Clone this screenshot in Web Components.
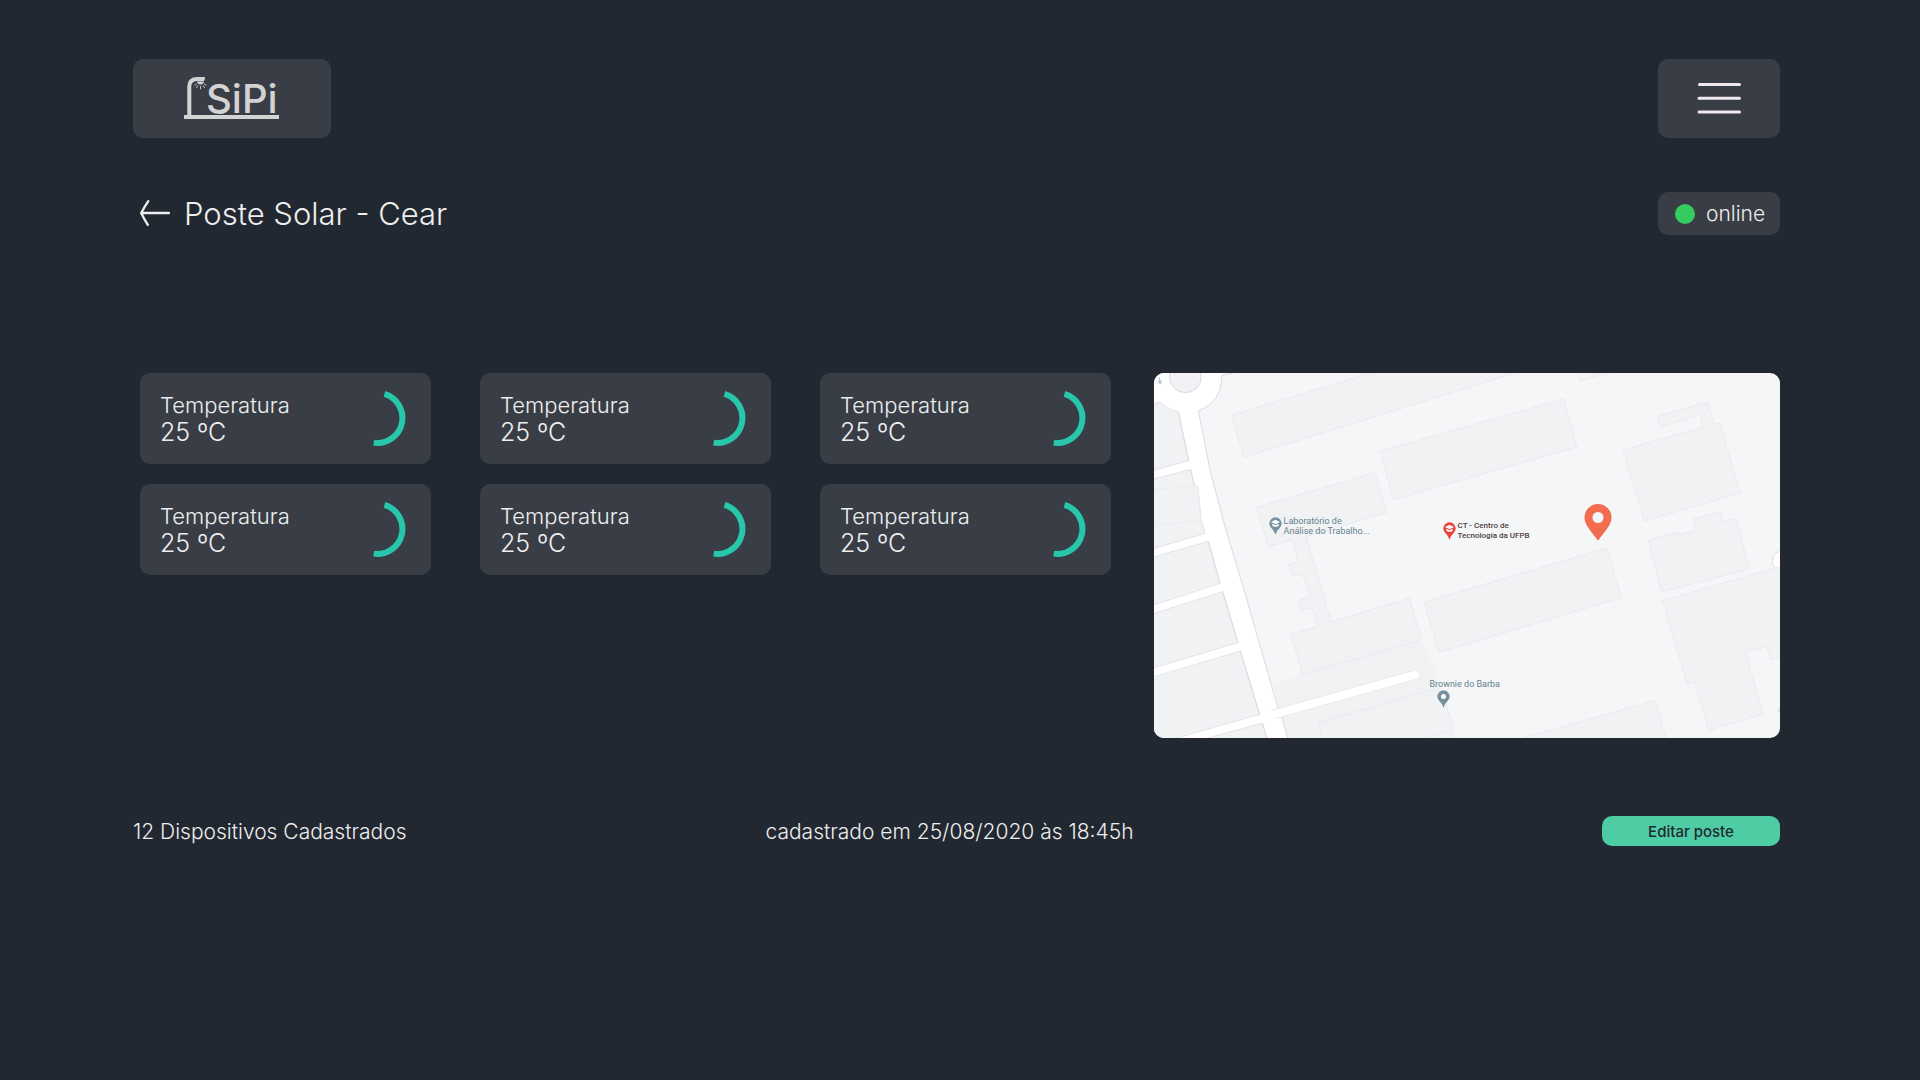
<!DOCTYPE html>
<html lang="pt-BR">
<head>
<meta charset="utf-8">
<meta name="viewport" content="width=device-width, initial-scale=1">
<title>SiPi</title>
<style>
  body {
    margin: 0;
    min-height: 100vh;
    background: #222831;
    color: #eeeeee;
    font-family: Inter, "Open Sans", sans-serif;
    font-weight: 300;
    --surface: #393e46;
    --radius: 10px;
  }
</style>
</head>
<body>
<sipi-page></sipi-page>

<script>
const define = (name, html) => {
  const template = document.createElement('template');
  template.innerHTML = html;
  customElements.define(name, class extends HTMLElement {
    constructor() {
      super();
      this.attachShadow({ mode: 'open' }).append(template.content.cloneNode(true));
    }
  });
};

define('sipi-logo', `
  <style>
    :host { display: block; }
    a { display: grid; place-items: center; width: 198px; height: 79px; background: var(--surface); border-radius: var(--radius); }
    svg { display: block; overflow: visible; }
    text { font-size: 40px; font-weight: 500; fill: #d3d3d3; }
  </style>
  <a href="#" aria-label="SiPi">
    <svg width="96" height="43" viewBox="0 0 96 43">
      <path d="M5.300 39V9.500Q5.300 2 13.500 2H19.500" fill="none" stroke="#d3d3d3" stroke-width="4"/>
      <path d="M18 0h2q1.500 0 1 1.500l-1 2.500h-6V1z" fill="#d3d3d3"/>
      <path d="M13 4.500h7q-.5 3-3.500 3T13 4.500z" fill="#d3d3d3"/>
      <path d="M12.800 7l-2.300 1.300M14 8.500l-1.700 2.500M16.500 9V12.200M19 8.500l1.700 2.500M20.200 7l2.300 1.300" stroke="#d3d3d3" stroke-width=".9"/>
      <rect x="0" y="38" width="95" height="4" fill="#d3d3d3"/>
      <text x="22" y="36">SiPi</text>
    </svg>
  </a>`);

define('menu-button', `
  <style>
    :host { display: block; }
    button { display: grid; place-items: center; width: 122px; height: 79px; padding: 0; border: 0; background: var(--surface); border-radius: var(--radius); cursor: pointer; }
    svg { display: block; }
  </style>
  <button type="button" aria-label="Menu">
    <svg width="44" height="33" viewBox="0 0 44 33" stroke="#f0eaee" stroke-width="3" stroke-linecap="round">
      <path d="M2.500 2.500H42.500M2 16.200H42.500M2 30H42.500"/>
    </svg>
  </button>`);

define('page-title', `
  <style>
    :host { display: flex; align-items: center; gap: 14px; padding-left: 7px; }
    button { display: block; padding: 0; border: 0; background: none; color: inherit; cursor: pointer; }
    svg { display: block; }
    h1 { margin: 0; font-size: 31px; line-height: 43px; font-weight: 300; }
  </style>
  <button type="button" aria-label="Voltar">
    <svg width="30" height="27" viewBox="0 0 30 27" fill="none" stroke="currentColor" stroke-width="2.300" stroke-linecap="round" stroke-linejoin="round">
      <path d="M8.300 1.200Q5 6 1.200 13Q3.500 18 7.800 24.800M1.200 13H29"/>
    </svg>
  </button>
  <h1><slot></slot></h1>`);

define('status-badge', `
  <style>
    :host { display: flex; align-items: center; gap: 11px; box-sizing: border-box; width: 122px; height: 43px; padding-left: 17px; background: var(--surface); border-radius: var(--radius); font-size: 21px; }
    i { width: 20px; height: 20px; border-radius: 50%; background: #34cb5f; }
  </style>
  <i></i><span><slot></slot></span>`);

define('sensor-card', `
  <style>
    :host { display: flex; align-items: center; justify-content: space-between; box-sizing: border-box; height: 91px; padding: 0 25px 0 20px; background: var(--surface); border-radius: var(--radius); line-height: 27px; }
    .label { font-size: 22px; }
    .value { font-size: 25px; }
    svg { display: block; }
  </style>
  <div>
    <div class="label"><slot name="label"></slot></div>
    <div class="value"><slot></slot></div>
  </div>
  <svg width="56" height="57" viewBox="0 0 56 57" fill="none" stroke="#28c7ab" stroke-width="6">
    <path d="M34.500 3.900A25 25 0 0 1 23.700 52.600"/>
  </svg>`);

/* A place on the map: its pin hangs from --x / --y, the label sits beside or above it. */
define('map-place', `
  <style>
    :host { position: absolute; left: var(--x); top: var(--y); display: flex; align-items: center; gap: 2px; color: #64828f; font: 400 9px/10px Roboto, sans-serif; white-space: nowrap; }
    :host([above]) { flex-direction: column-reverse; gap: 1px; }
    :host([main]) { color: #4a3f3a; font-size: 8px; font-weight: 500; --pin: #ea4335; }
    svg { display: block; width: 13px; height: 18px; }
    .cap { display: none; }
    :host([school]) .cap { display: block; }
    :host([school]) .hole { display: none; }
    :host([above]) svg { margin-right: 42px; }
  </style>
  <svg viewBox="0 0 39 54">
    <path d="M19.500 1a18.500 18.500 0 0 1 18.500 18.500c0 11-12 17-16 28l-2.500 6-2.500-6c-4-11-16-17-16-28A18.500 18.500 0 0 1 19.500 1z" style="fill: var(--pin, #7790a0)"/>
    <circle class="hole" cx="19.500" cy="19.500" r="7.500" fill="#fff"/>
    <path class="cap" d="M19.500 8L33 15 19.500 22 6 15zM10 20l9.500 5 9.500-5v6q-9.500 7-19 0z" fill="#fff"/>
  </svg>
  <span><slot></slot></span>`);

define('location-map', `
  <style>
    :host { display: block; position: relative; overflow: hidden; border-radius: var(--radius); background: #f5f6f8; aspect-ratio: 626 / 365; }
    .ground { display: block; width: 100%; height: 100%; }
    .pole { position: absolute; left: 68.700%; top: 35.600%; width: 28px; height: 38px; }
  </style>
  <svg class="ground" viewBox="42 39 1878 1095" preserveAspectRatio="xMidYMid slice" aria-hidden="true">
    <g fill="#f1f2f4" stroke="#e9eaed" stroke-width="3">
      <path d="M400 975L488 943 845 840 886 930 950 1140H443z" stroke="none"/>
      <path d="M534 1089L880 988 908 1000 942 1105 830 1140H547z"/>
      <path d="M274 166L690 39V30H1150L1125 39 312 292z"/>
      <path d="M720 274L1271 117 1311 261 760 419z"/>
      <path d="M350 442L704 338 740 457 498 530 510 570 573 785 808 715 845 840 488 943 453 823 533 799 517 743 486 751 478 721 510 710 487 640 458 650 447 613 474 606 458 539 385 560z"/>
      <path d="M852 727L1400 564 1444 713 897 877z"/>
      <path d="M1312 30L1322 63 1435 30z"/>
      <path d="M1553 169L1703 126 1722 193 1740 189 1801 399 1513 483 1449 270 1689 201 1679 165 1561 200z"/>
      <path d="M1525 541L1617 516 1620 523 1669 510 1662 476 1740 456 1749 485 1789 475 1828 627 1565 696z"/>
      <circle cx="1930" cy="603" r="33" fill="#fff" stroke="#d9dbe2"/>
      <path d="M1568 722L1930 617V890L1892 899 1881 860 1816 877 1870 1062 1706 1111 1665 966 1641 971z"/>
      <path d="M1125 1140L1546 1022 1580 1140z"/>
    </g>
    <circle cx="1924" cy="1051" r="9" fill="#d9dbe2"/>
    <path d="M30 30H245L245 60Q238 128 175 152L210 330 255 500 315 700 415 1048 445 1140H30z" fill="#fff"/>
    <g fill="none" stroke="#d9dbe2" stroke-width="3">
      <path d="M280 39L245 47Q245 128 175 152L210 330 255 500 315 700 415 1048"/>
      <path d="M425 1072L445 1140"/>
    </g>
    <path d="M405 1062L826 944" stroke="#e6e7ea" stroke-width="29" stroke-linecap="round"/>
    <path d="M395 1065L826 944" stroke="#fff" stroke-width="25" stroke-linecap="round"/>
    <g fill="#f1f2f4" stroke="#dfe0e5" stroke-width="2.500">
      <path d="M30 134L60 126Q82 149 115 155L146 302 30 334z"/>
      <path d="M30 360L152 328 163 376 173 378 184 482 196 520 30 569z"/>
      <path d="M30 594L205 544 240 670 30 739z"/>
      <path d="M30 764L248 695 294 848 30 927z"/>
      <path d="M30 954L301 873 359 1063 100 1137 30 1155z"/>
      <path d="M180 1140L367 1089 382 1140z"/>
      <path d="M30 390L170 378M30 497L184 481" stroke="#e9eaed"/>
    </g>
    <g fill="none" stroke="#d9dbe2" stroke-width="3">
      <path d="M115 155L146 302M152 328L163 376M205 544L240 670M248 695L294 848M301 873L359 1063M367 1089L382 1140"/>
      <circle cx="136" cy="50" r="48" fill="#f1f2f4"/>
    </g>
    <path d="M57 52L61 70M54 64L61 71 65 61" stroke="#bcc3dd" stroke-width="4" fill="none"/>
  </svg>
  <map-place school style="--x: 18.300%; --y: 39.100%">Laboratório de<br>Análise do Trabalho...</map-place>
  <map-place school main style="--x: 46.100%; --y: 40.500%">CT - Centro de<br>Tecnologia da UFPB</map-place>
  <map-place above style="--x: 44%; --y: 83.900%">Brownie do Barba</map-place>
  <svg class="pole" viewBox="0 0 28 38" role="img" aria-label="Poste">
    <path d="M14 1A13.500 13.500 0 0 1 27.500 14.500C27.500 22 20.500 28.500 15 36.500Q14 38 13 36.500C7.500 28.500.5 22 .5 14.500A13.500 13.500 0 0 1 14 1z" fill="#f26d50"/>
    <circle cx="14" cy="14.500" r="5.500" fill="#f5f6f8"/>
  </svg>`);

define('edit-button', `
  <style>
    :host { display: block; }
    button { display: block; width: 178px; height: 30px; padding: 0; border: 0; border-radius: var(--radius); background: #4ecca3; color: #222831; font: inherit; font-size: 15px; font-weight: 500; cursor: pointer; }
  </style>
  <button type="button"><slot></slot></button>`);

define('sipi-page', `
  <style>
    :host { display: block; padding: 59px 140px 59px 133px; }
    header, .heading { display: flex; align-items: center; justify-content: space-between; }
    .heading { margin-top: 54px; }
    main { display: grid; grid-template-columns: 971fr 626fr; gap: 43px; align-items: start; margin-top: 138px; padding-left: 7px; }
    .cards { display: grid; grid-template-columns: repeat(3, 1fr); gap: 20px 49px; }
    footer { display: grid; grid-template-columns: 1fr auto 1fr; align-items: center; margin-top: 78px; font-size: 21px; }
    .date { margin-right: 14px; }
    edit-button { justify-self: end; }
  </style>
  <header>
    <sipi-logo></sipi-logo>
    <menu-button></menu-button>
  </header>
  <div class="heading">
    <page-title>Poste Solar - Cear</page-title>
    <status-badge>online</status-badge>
  </div>
  <main>
    <section class="cards">
      <sensor-card><span slot="label">Temperatura</span>25 ºC</sensor-card>
      <sensor-card><span slot="label">Temperatura</span>25 ºC</sensor-card>
      <sensor-card><span slot="label">Temperatura</span>25 ºC</sensor-card>
      <sensor-card><span slot="label">Temperatura</span>25 ºC</sensor-card>
      <sensor-card><span slot="label">Temperatura</span>25 ºC</sensor-card>
      <sensor-card><span slot="label">Temperatura</span>25 ºC</sensor-card>
    </section>
    <location-map></location-map>
  </main>
  <footer>
    <span>12 Dispositivos Cadastrados</span>
    <span class="date">cadastrado em 25/08/2020 às 18:45h</span>
    <edit-button>Editar poste</edit-button>
  </footer>`);
</script>
</body>
</html>
